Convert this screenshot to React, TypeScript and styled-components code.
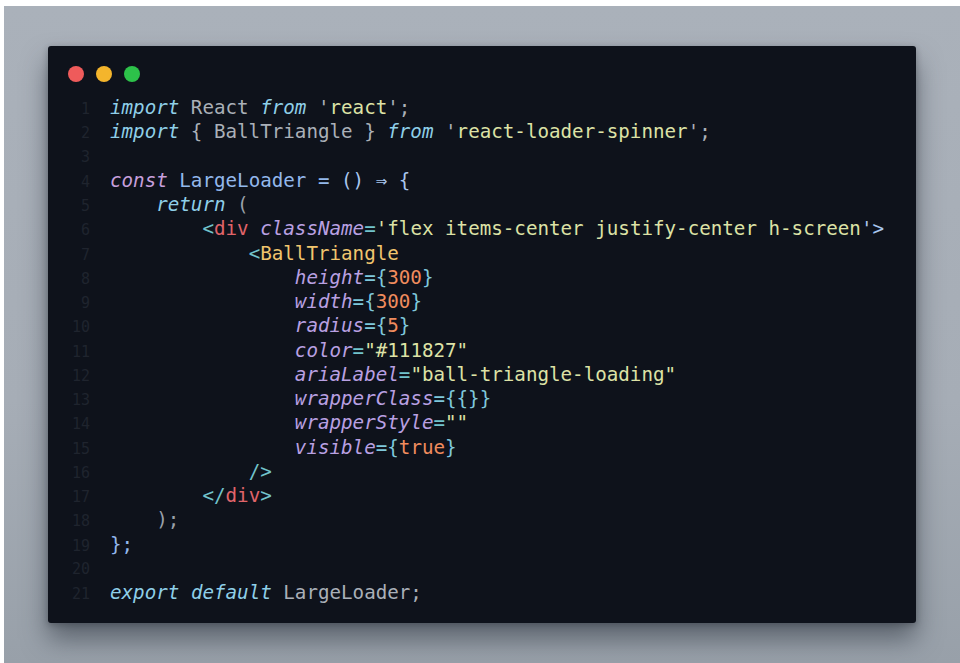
import React from 'react';
import styled, { createGlobalStyle } from 'styled-components';

const Global = createGlobalStyle`
  html, body { margin: 0; padding: 0; background: #ffffff; }
  #root { width: 960px; height: 663px; }
`;

const Frame = styled.div`
  width: 960px;
  height: 663px;
  box-sizing: border-box;
  padding: 6px 0 0 4px;
  background: #ffffff;
  display: flex;
`;

const Backdrop = styled.div`
  flex: 1;
  box-sizing: border-box;
  padding: 40px 44px 40px 44px;
  background: linear-gradient(180deg, #aab1ba 0%, #a6adb6 60%, #98a0a9 100%);
  display: flex;
  align-items: flex-start;
`;

const Window = styled.div`
  width: 868px;
  height: 577px;
  box-sizing: border-box;
  background: #0e121b;
  border-radius: 3px;
  padding: 20px 20px 0 20px;
  box-shadow: 0 16px 26px rgba(40, 48, 58, 0.55), 0 2px 6px rgba(20, 24, 30, 0.3);
  display: flex;
  flex-direction: column;
  gap: 14px;
`;

const Lights = styled.div`
  display: flex;
  gap: 12px;
  height: 16px;
`;

const Light = styled.span<{ $c: string }>`
  width: 16px;
  height: 16px;
  border-radius: 50%;
  background: ${(p) => p.$c};
`;

const Code = styled.div`
  display: flex;
  flex-direction: column;
  font-family: 'DejaVu Sans Mono', 'Liberation Mono', monospace;
  font-size: 19.2px;
  line-height: 24.25px;
`;

const Row = styled.div`
  display: flex;
  align-items: baseline;
  white-space: pre;
  height: 24.25px;
`;

const LineNo = styled.span`
  width: 22px;
  text-align: right;
  font-size: 15px;
  color: #1f242e;
  margin-right: 20px;
`;

const Tok = styled.span<{ $c: string; $i?: boolean }>`
  color: ${(p) => p.$c};
  font-style: ${(p) => (p.$i ? 'italic' : 'normal')};
`;

const C = {
  kw: '#8fcfe8',
  plain: '#aab0b8',
  str: '#dde2a6',
  cst: '#c69fdc',
  name: '#93b8ec',
  punct: '#a9c6ee',
  tag: '#72c3cc',
  div: '#e0646a',
  attr: '#b9a0e2',
  comp: '#f1c56e',
  num: '#f08c5e',
  brace: '#7fc8dc',
  gray: '#9aa1aa',
};

type T = [string, string, boolean?];

const lines: T[][] = [
  [['import', C.kw, true], [' React ', C.plain], ['from', C.kw, true], [" '", C.plain], ['react', C.str], ["';", C.plain]],
  [['import', C.kw, true], [' { BallTriangle } ', C.plain], ['from', C.kw, true], [" '", C.plain], ['react-loader-spinner', C.str], ["';", C.plain]],
  [],
  [['const', C.cst, true], [' LargeLoader ', C.name], ['=', C.name], [' () ⇒ {', C.punct]],
  [['    ', C.plain], ['return', C.kw, true], [' (', C.gray]],
  [['        ', C.plain], ['<', C.tag], ['div', C.div], [' ', C.plain], ['className', C.attr, true], ['=', C.tag], ["'flex items-center justify-center h-screen", C.str], ["'>", C.punct]],
  [['            ', C.plain], ['<', C.tag], ['BallTriangle', C.comp]],
  [['                ', C.plain], ['height', C.attr, true], ['={', C.brace], ['300', C.num], ['}', C.brace]],
  [['                ', C.plain], ['width', C.attr, true], ['={', C.brace], ['300', C.num], ['}', C.brace]],
  [['                ', C.plain], ['radius', C.attr, true], ['={', C.brace], ['5', C.num], ['}', C.brace]],
  [['                ', C.plain], ['color', C.attr, true], ['=', C.tag], ['"#111827"', C.str]],
  [['                ', C.plain], ['ariaLabel', C.attr, true], ['=', C.tag], ['"ball-triangle-loading"', C.str]],
  [['                ', C.plain], ['wrapperClass', C.attr, true], ['={{}}', C.brace]],
  [['                ', C.plain], ['wrapperStyle', C.attr, true], ['=', C.tag], ['""', C.str]],
  [['                ', C.plain], ['visible', C.attr, true], ['={', C.brace], ['true', C.num], ['}', C.brace]],
  [['            ', C.plain], ['/>', C.tag]],
  [['        ', C.plain], ['</', C.tag], ['div', C.div], ['>', C.tag]],
  [['    ', C.plain], [');', C.gray]],
  [['};', C.name]],
  [],
  [['export', C.kw, true], [' ', C.plain], ['default', C.kw, true], [' LargeLoader;', C.plain]],
];

export default function App() {
  return (
    <>
      <Global />
      <Frame>
        <Backdrop>
          <Window>
            <Lights>
              <Light $c="#ef5b5b" />
              <Light $c="#f4b52c" />
              <Light $c="#2dc24a" />
            </Lights>
            <Code>
              {lines.map((toks, i) => (
                <Row key={i}>
                  <LineNo>{i + 1}</LineNo>
                  {toks.map((t, j) => (
                    <Tok key={j} $c={t[1]} $i={t[2]}>
                      {t[0]}
                    </Tok>
                  ))}
                </Row>
              ))}
            </Code>
          </Window>
        </Backdrop>
      </Frame>
    </>
  );
}
